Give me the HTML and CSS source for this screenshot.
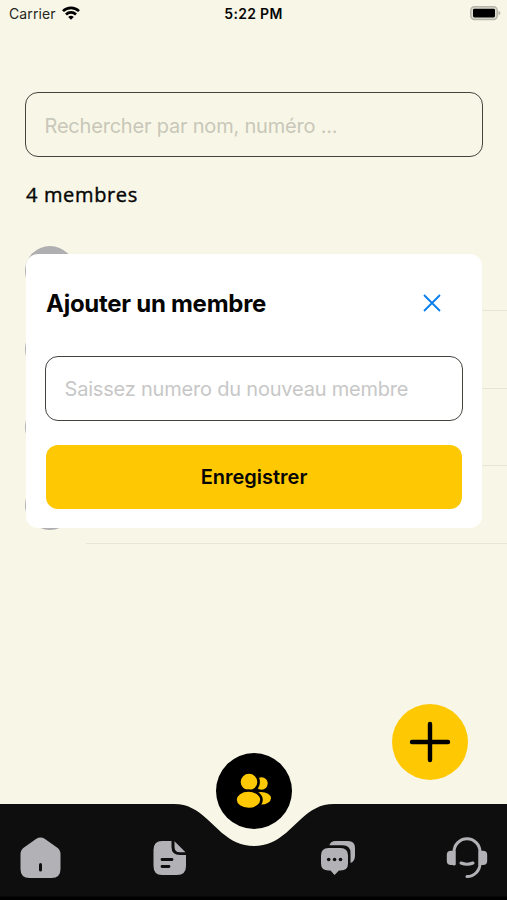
FILE: index.html
```html
<!DOCTYPE html>
<html lang="fr">
<head>
<meta charset="utf-8">
<meta name="viewport" content="width=device-width, initial-scale=1">
<title>Membres</title>
<link rel="stylesheet" href="styles.css">
</head>
<body>
<div class="screen">
  <header class="status">
    <div class="carrier"><span class="carrier-name">Carrier</span>
      <svg class="wifi" width="18" height="14" viewBox="0 0 18 14" fill="none" stroke="#000" stroke-width="2.7"><path d="M1 5.100a11.400 11.400 0 0 1 16 0M4 8.500a7.100 7.100 0 0 1 10 0"/><path d="M9 13.800 6.200 11a4 4 0 0 1 5.600 0z" fill="#000" stroke="none"/></svg>
    </div>
    <div class="time">5:22 PM</div>
    <svg class="battery" width="31" height="15" viewBox="0 0 31 15"><rect x=".8" y=".8" width="26.400" height="12.600" rx="3.600" fill="#deddcf" stroke="#b5b5a9" stroke-width="1.500"/><rect x="3" y="2.700" width="22" height="8.800" rx="1.400"/><path d="M28.500 4.800q2 .9 2 2.300t-2 2.300z" fill="#b5b5a9"/></svg>
  </header>
  <main class="content">
    <div class="field search"><span class="search-text">Rechercher par nom, numéro ...</span></div>
    <h1 class="count"><span>4 membres</span></h1>
    <ul class="members">
      <li class="member"><i class="avatar"></i><i class="line"></i></li>
      <li class="member"><i class="avatar"></i><i class="line"></i></li>
      <li class="member"><i class="avatar"></i><i class="line"></i></li>
      <li class="member"><i class="avatar"></i><i class="line"></i></li>
    </ul>
  </main>
  <nav class="tabs">
    <svg class="tabs-bg" width="507" height="96" viewBox="0 0 507 96"><path fill="#0e0e0e" d="M0 0H174C188 0 197 6 207 15L222 29C232 37 241 42 254 42S276 37 286 29L301 15C311 6 320 0 334 0H507V96H0z"/><path d="M0 92.500H507V96H0z"/></svg>
    <div class="tab-group">
      <svg width="41" height="42" viewBox="0 0 41 42"><path fill="#b2b1b6" d="M16 2Q20.500-.8 25 2L37 10.500Q40.500 13 40.500 17V32Q40.500 41 31.500 41H9.500Q.5 41 .5 32V17Q.5 13 4 10.500z"/><path d="M20.500 27.500V33" stroke="#0e0e0e" stroke-width="3" stroke-linecap="round"/></svg>
      <svg width="34" height="36" viewBox="0 0 34 36"><path fill="#b2b1b6" d="M9 1H18.500V7Q18.500 15 27 15H33V26Q33 35 24 35H9Q.5 35 .5 26V10Q.5 1 9 1zM21.500 1.200 32.500 12.300H27Q21.500 12.300 21.500 7z"/><path d="M9 19.500H19M9 26.500H16" stroke="#0e0e0e" stroke-width="2.800" stroke-linecap="round"/></svg>
    </div>
    <div class="tab-group">
      <svg width="36" height="36" viewBox="0 0 36 36"><path fill="#b2b1b6" d="M9.300 5.300Q10.800 1 15.500 1H28Q35 1 35 8V15.500Q35 21.500 30.500 23V13Q30.500 5.300 22.500 5.300zM8.500 8H20.500Q28 8 28 15.500V23.500Q28 30.500 20.500 30.500H19L14.500 35 10.500 30.500H8.500Q1 30.500 1 23.500V15.500Q1 8 8.500 8z"/><g fill="#0e0e0e"><circle cx="8.700" cy="19.500" r="1.800"/><circle cx="14.600" cy="19.500" r="1.800"/><circle cx="20.500" cy="19.500" r="1.800"/></g></svg>
      <svg width="42" height="42" viewBox="0 0 42 42" fill="none" stroke="#b2b1b6" stroke-width="3"><path d="M8 27V15A13 13.200 0 0 1 34 15V26.500A13 13 0 0 1 21 39.500" stroke-linecap="round"/><path d="M9.500 13.800V28H5Q.8 28 .8 24V17.800Q.8 13.800 5 13.800zM32.500 13.800V28H37Q41.200 28 41.200 24V17.800Q41.200 13.800 37 13.800z" fill="#b2b1b6" stroke="none"/><path d="M15 26Q21 28.500 27 26" stroke-linecap="round"/></svg>
    </div>
  </nav>
  <button class="round fab" aria-label="Ajouter"><svg width="42" height="42" viewBox="0 0 42 42"><path d="M21 3V39M3 21H39" stroke="#000" stroke-width="4.400" stroke-linecap="round"/></svg></button>
  <button class="round people" aria-label="Membres"><svg width="36" height="36" viewBox="0 0 36 36"><g fill="#fec802"><circle cx="25.500" cy="10.500" r="6.200"/><ellipse cx="25" cy="25.300" rx="10" ry="6.300"/></g><g fill="#fec802" stroke="#000" stroke-width="2.600"><circle cx="13" cy="9" r="9.600"/><ellipse cx="12.500" cy="26.800" rx="13" ry="9.300"/></g></svg></button>
  <section class="modal" role="dialog">
    <div class="modal-head"><h2><span>Ajouter un membre</span></h2>
      <svg width="18" height="18" viewBox="0 0 18 18"><path d="M1 1 17 17M17 1 1 17" stroke="#087eed" stroke-width="1.800"/></svg>
    </div>
    <div class="field"><span class="number-text">Saissez numero du nouveau membre</span></div>
    <button class="save"><span>Enregistrer</span></button>
  </section>
</div>
</body>
</html>
```
FILE: styles.css
```css
* { box-sizing: border-box; }
body { margin: 0; font-family: Inter, "Liberation Sans", sans-serif; background: #f8f7e7; color: #050505; }
.screen { position: relative; width: 507px; height: 900px; overflow: hidden; display: flex; flex-direction: column; }
button { border: 0; padding: 0; font-family: inherit; color: inherit; }
svg { display: block; flex: none; overflow: visible; }
.status { height: 28px; display: grid; grid-template-columns: 1fr auto 1fr; align-items: center; padding: 0 6px 0 9px; font-size: 14px; }
.carrier { display: flex; align-items: center; gap: 6px; margin-top: -1px; }
.carrier-name { color: #252522; letter-spacing: 0.1px; }
.wifi { margin-top: -2px; }
.time { font-weight: 600; letter-spacing: 0.3px; margin: -1px 0 0 -3px; }
.battery { justify-self: end; margin-top: -1px; }
.content { flex: 1; padding: 64px 0 0 25px; }
.field { display: flex; align-items: center; height: 65px; border: 1.5px solid #44433e; border-radius: 13px; padding: 0 18.5px; font-size: 20px; letter-spacing: -0.2px; white-space: nowrap; color: #c7c7c7; }
.search { width: 458px; color: #c8c7b9; padding-top: 2px; }
.count { margin: 0; height: 76px; padding: 23px 0 0 1px; font: 500 20px/30px "Open Sans", sans-serif; letter-spacing: 0.65px; -webkit-text-stroke: 0.4px #050505; }
.members { list-style: none; margin: 0; padding: 0; }
.member { height: 77.8px; display: flex; align-items: center; gap: 10.5px; padding-left: 0.4px; }
.avatar { width: 50px; height: 50px; margin-top: -1px; border-radius: 50%; background: #afafb2; }
.line { flex: 1; align-self: flex-end; height: 1px; background: #e6e5d8; }
.tabs { position: relative; height: 96px; display: flex; justify-content: space-between; padding: 12px 19px 0 20px; }
.tab-group { position: relative; display: flex; align-items: center; gap: 92px; }
.tabs .tabs-bg { position: absolute; left: 0; top: 0; }
.tab-group:last-child { gap: 90px; }
.round { position: absolute; width: 76px; height: 76px; border-radius: 50%; display: flex; align-items: center; justify-content: center; }
.fab { left: 392px; top: 704px; background: #fec802; }
.people { left: 216px; top: 752.5px; background: #000; }
.modal { position: absolute; left: 26px; top: 254px; width: 456px; height: 274px; border-radius: 12px; background: #fff; padding: 0 19px; }
.modal-head { height: 101px; display: flex; align-items: center; justify-content: space-between; padding: 0 22px 3px 1px; }
h2 { margin: 0; font-size: 24px; font-weight: 700; letter-spacing: -0.27px; }
.modal .field { margin-top: 1px; }
.save { display: block; width: 416px; height: 64px; margin: 24px 0 0 1px; border-radius: 12px; background: #fec802; font-size: 20px; font-weight: 600; }
```
